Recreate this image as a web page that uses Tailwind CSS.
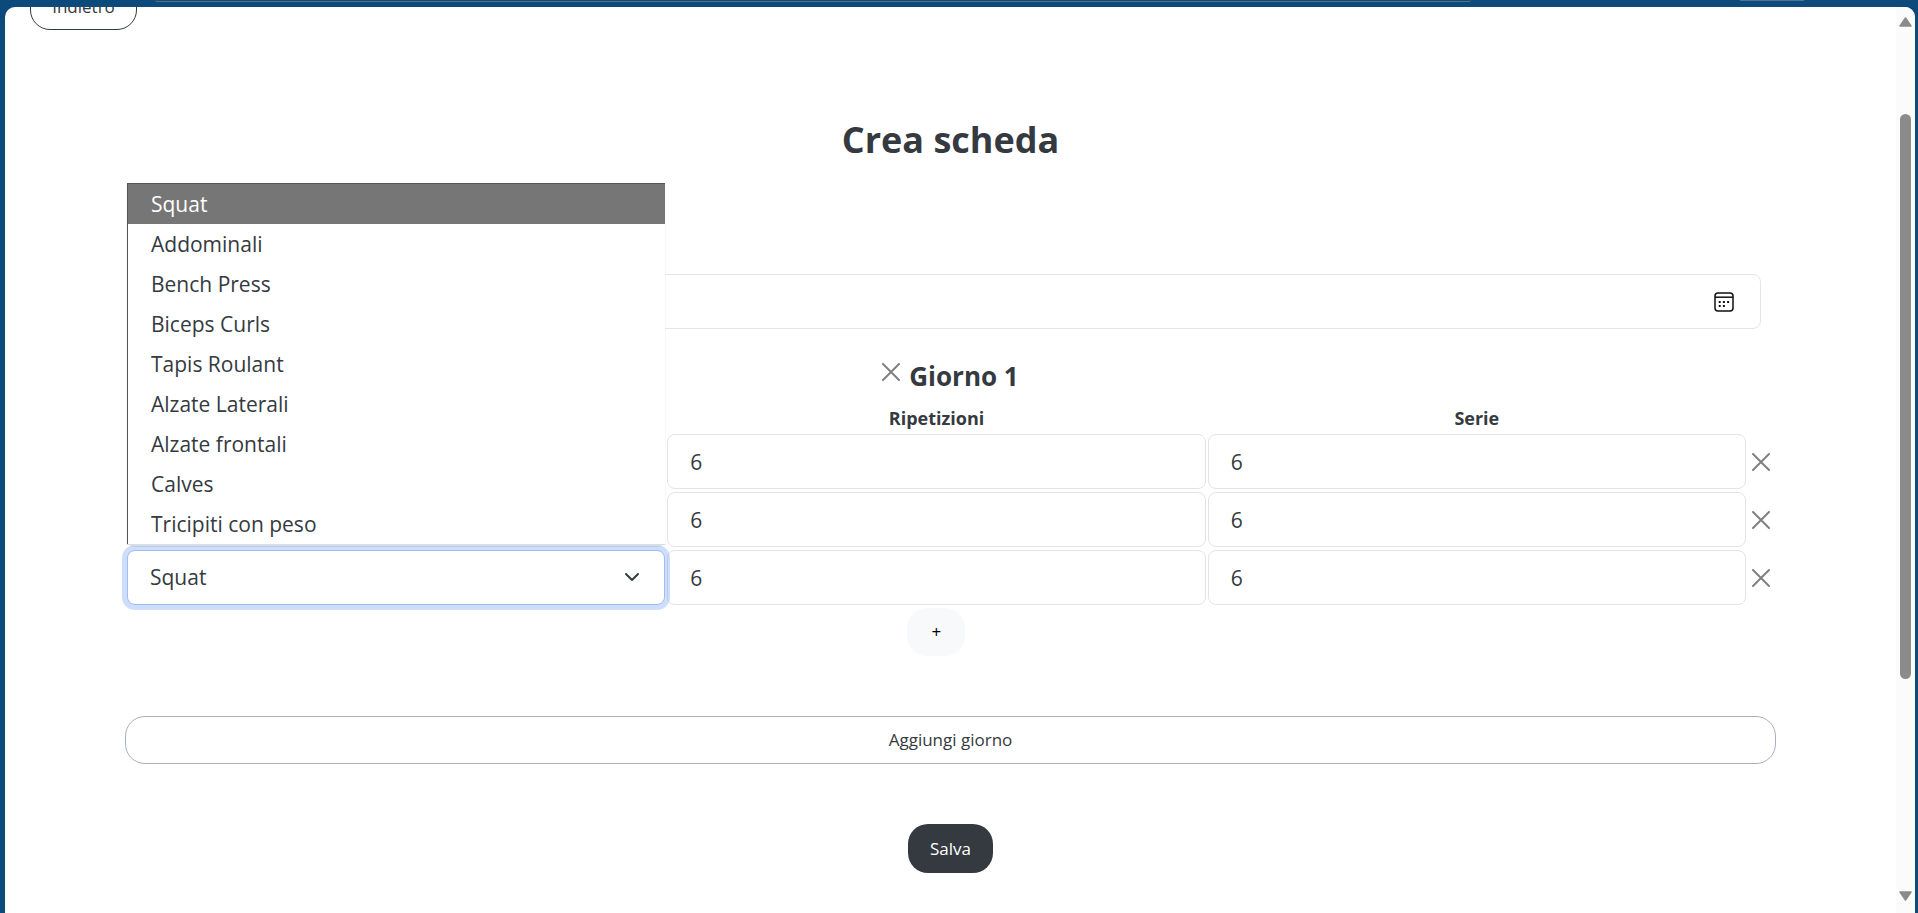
<!DOCTYPE html>
<html lang="it">
<head>
<meta charset="utf-8">
<title>Crea scheda</title>
<script src="https://cdn.jsdelivr.net/npm/@tailwindcss/browser@4"></script>
</head>
<body class="h-screen overflow-hidden bg-[#0b4a7a] font-['Open_Sans','Noto_Sans',sans-serif] text-[#343a40]">
<svg class="hidden">
  <symbol id="x" viewBox="0 0 18 18"><path d="M1 1 17 17M17 1 1 17" fill="none" stroke="#808080" stroke-width="2" stroke-linecap="round"/></symbol>
  <symbol id="chevron" viewBox="0 0 16 16"><path d="m2 5 6 6 6-6" fill="none" stroke="#343a40" stroke-width="2" stroke-linecap="round" stroke-linejoin="round"/></symbol>
</svg>
<div class="flex h-full flex-col pr-[3px] pl-[5px]">
  <!-- Lower edge of the browser toolbar -->
  <div class="flex h-[7px] shrink-0 items-start pr-[111px] pl-[150px]">
    <div class="h-[2px] w-[1316px] rounded-b-lg border-b border-[#4a7396] bg-[#1f4864]"></div>
    <div class="ml-auto h-px w-[64px] bg-[#4a7396]"></div>
  </div>
  <div class="flex min-h-0 flex-1 overflow-hidden rounded-t-[10px] bg-white">
    <main class="min-w-0 flex-1 overflow-hidden px-[120px]">
      <button type="button" class="-mt-[26px] -ml-[95px] block h-[49px] w-[107px] rounded-[20px] border border-[#343a40] pt-[2px] text-[17px]">Indietro</button>
      <h1 class="mt-[82px] text-center text-[36px] leading-[56px] font-bold">Crea scheda</h1>
      <form class="mt-[106px]">
        <div class="relative mx-[15px]">
          <input type="date" aria-label="Data" class="h-[55px] w-full rounded-lg border border-[#e3e4e6] px-[22px] text-[21px] outline-none [&::-webkit-calendar-picker-indicator]:opacity-0">
          <svg class="pointer-events-none absolute top-[18px] right-[27px] size-5" viewBox="0 0 20 20"><rect x="1" y="1" width="18" height="18" rx="3" fill="none" stroke="#111" stroke-width="1.5"/><path d="M1 5.2h18" stroke="#111" stroke-width="1.5"/><path d="M4.7 9h2v2h-2zM8.9 9h2v2h-2zM13.1 9h2v2h-2zM4.7 13h2v2h-2zM8.9 13h2v2h-2z" fill="#111"/></svg>
        </div>
        <div class="mt-[27px] flex h-[40px] items-center justify-center gap-[9px]">
          <button type="button" aria-label="Rimuovi giorno" class="mb-[8px]"><svg class="size-[18px]"><use href="#x"/></svg></button>
          <h2 class="text-[26px] leading-[40px] font-bold">Giorno 1</h2>
        </div>
        <table class="w-full table-fixed border-separate border-spacing-x-[2px] border-spacing-y-[3px]">
          <colgroup><col><col><col><col class="w-[26px]"></colgroup>
          <thead class="text-[18px] leading-[26px]">
            <tr><th class="p-0" aria-label="Esercizio"></th><th class="p-0 pt-[6px]">Ripetizioni</th><th class="p-0 pt-[6px]">Serie</th><th class="p-0" aria-label="Rimuovi"></th></tr>
          </thead>
          <tbody class="text-[21px]">
            <tr>
              <td class="p-0"><select aria-label="Esercizio 1" class="block h-[55px] w-full appearance-none rounded-lg border border-[#e3e4e6] px-[22px]"><option>Squat</option></select></td>
              <td class="p-0"><input aria-label="Ripetizioni 1" value="6" class="block h-[55px] w-full rounded-lg border border-[#e3e4e6] px-[22px]"></td>
              <td class="p-0"><input aria-label="Serie 1" value="6" class="block h-[55px] w-full rounded-lg border border-[#e3e4e6] px-[22px]"></td>
              <td class="p-0"><button type="button" aria-label="Rimuovi 1" class="mx-auto block"><svg class="size-[18px]"><use href="#x"/></svg></button></td>
            </tr>
            <tr>
              <td class="p-0"><select aria-label="Esercizio 2" class="block h-[55px] w-full appearance-none rounded-lg border border-[#e3e4e6] px-[22px]"><option>Squat</option></select></td>
              <td class="p-0"><input aria-label="Ripetizioni 2" value="6" class="block h-[55px] w-full rounded-lg border border-[#e3e4e6] px-[22px]"></td>
              <td class="p-0"><input aria-label="Serie 2" value="6" class="block h-[55px] w-full rounded-lg border border-[#e3e4e6] px-[22px]"></td>
              <td class="p-0"><button type="button" aria-label="Rimuovi 2" class="mx-auto block"><svg class="size-[18px]"><use href="#x"/></svg></button></td>
            </tr>
            <tr>
              <td class="relative p-0">
                <select aria-label="Esercizio 3" class="block h-[55px] w-full appearance-none rounded-lg border border-[#9dbdf5] bg-white px-[22px] ring-5 ring-[#3b7ceb]/25 outline-none"><option>Squat</option></select>
                <svg class="pointer-events-none absolute top-[19px] right-[25px] size-4"><use href="#chevron"/></svg>
                <ul role="listbox" class="absolute right-0 bottom-full left-0 z-10 mb-[6px] border-t border-l border-[#555] bg-white leading-[40px] shadow-[0_1px_1px_#ddd] *:pl-[23px]">
                  <li role="option" aria-selected="true" class="bg-[#767676] text-white">Squat</li>
                  <li role="option">Addominali</li>
                  <li role="option">Bench Press</li>
                  <li role="option">Biceps Curls</li>
                  <li role="option">Tapis Roulant</li>
                  <li role="option">Alzate Laterali</li>
                  <li role="option">Alzate frontali</li>
                  <li role="option">Calves</li>
                  <li role="option">Tricipiti con peso</li>
                </ul>
              </td>
              <td class="p-0"><input aria-label="Ripetizioni 3" value="6" class="block h-[55px] w-full rounded-lg border border-[#e3e4e6] px-[22px]"></td>
              <td class="p-0"><input aria-label="Serie 3" value="6" class="block h-[55px] w-full rounded-lg border border-[#e3e4e6] px-[22px]"></td>
              <td class="p-0"><button type="button" aria-label="Rimuovi 3" class="mx-auto block"><svg class="size-[18px]"><use href="#x"/></svg></button></td>
            </tr>
            <tr>
              <td class="p-0"></td>
              <td class="p-0"><button type="button" class="mx-auto block h-[48px] w-[58px] rounded-[20px] bg-[#f8f9fa] text-[17px] text-black">+</button></td>
            </tr>
          </tbody>
        </table>
        <button type="button" class="mt-[57px] block h-[48px] w-full rounded-[20px] border border-[#a5b1be] text-[17px]">Aggiungi giorno</button>
        <button type="submit" class="mx-auto mt-[60px] block h-[49px] w-[85px] rounded-[20px] bg-[#343a40] text-[17px] text-white">Salva</button>
      </form>
    </main>
    <!-- Scrollbar -->
    <div class="flex w-[19px] shrink-0 flex-col items-center bg-[#fbfbfb] pt-[10px] pb-[12px]">
      <svg class="h-[10px] w-[13px] shrink-0" viewBox="0 0 13 10"><path d="M6.500 1 12 9H1Z" fill="#8b8b8b" stroke="#8b8b8b" stroke-width="1.500" stroke-linejoin="round"/></svg>
      <div class="flex w-[11px] flex-1 flex-col">
        <div style="height:10.100%"></div>
        <div class="rounded-full bg-[#8b8b8b]" style="height:65.400%"></div>
      </div>
      <svg class="h-[10px] w-[13px] shrink-0" viewBox="0 0 13 10"><path d="M6.500 9 1 1h11Z" fill="#8b8b8b" stroke="#8b8b8b" stroke-width="1.500" stroke-linejoin="round"/></svg>
    </div>
  </div>
</div>
</body>
</html>
